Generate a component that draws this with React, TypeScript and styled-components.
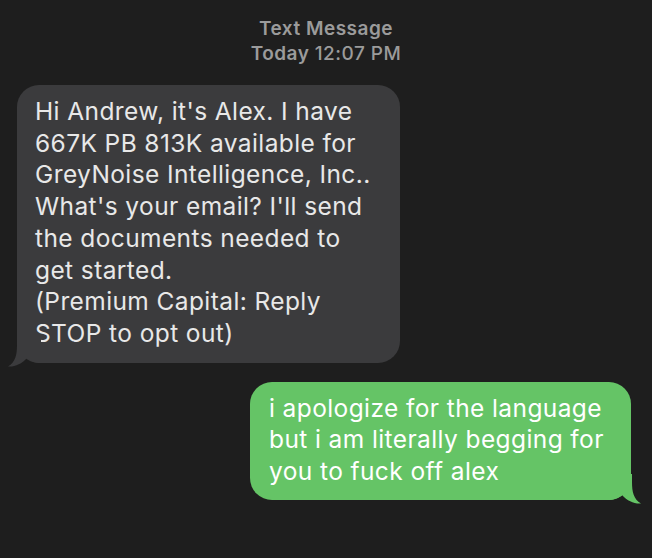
import React from 'react';
import styled, { createGlobalStyle } from 'styled-components';

const GlobalStyle = createGlobalStyle`
  html, body {
    margin: 0;
    padding: 0;
    background: #1e1e1e;
  }
  body {
    font-family: Inter, "Liberation Sans", sans-serif;
    -webkit-font-smoothing: antialiased;
  }
`;

const Page = styled.div`
  width: 652px;
  height: 558px;
  box-sizing: border-box;
  padding-top: 16px;
  display: flex;
  flex-direction: column;
  overflow: hidden;
`;

const Header = styled.div`
  align-self: center;
  text-align: center;
  color: #9b9b9b;
  font-size: 19px;
  line-height: 25px;
  letter-spacing: 0.5px;
  font-weight: 600;
`;

const Time = styled.span`
  font-weight: 500;
`;

const Row = styled.div<{ $outgoing?: boolean }>`
  display: flex;
  justify-content: ${(p) => (p.$outgoing ? 'flex-end' : 'flex-start')};
  padding: ${(p) => (p.$outgoing ? '0 21px 0 0' : '0 0 0 17px')};
  margin-top: 19px;
`;

const Bubble = styled.div<{ $outgoing?: boolean }>`
  position: relative;
  box-sizing: border-box;
  width: ${(p) => (p.$outgoing ? '381px' : '383px')};
  padding: ${(p) => (p.$outgoing ? '11px 18px 12px 19px' : '11px 18px 13px 18px')};
  border-radius: 22px;
  background: ${(p) => (p.$outgoing ? '#65c466' : '#3b3b3d')};
  color: ${(p) => (p.$outgoing ? '#ffffff' : '#e8e8e8')};
  font-size: 24.5px;
  letter-spacing: 0.4px;
  line-height: 31.7px;
  white-space: nowrap;
`;

const Tail = styled.svg<{ $outgoing?: boolean }>`
  position: absolute;
  bottom: -4px;
  width: 40px;
  height: 30px;
  ${(p) =>
    p.$outgoing
      ? 'right: -11px; transform: scaleX(-1);'
      : 'left: -10px;'}
`;

function BubbleTail({ outgoing, color }: { outgoing?: boolean; color: string }) {
  return (
    <Tail $outgoing={outgoing} viewBox="0 0 40 30">
      <path
        d="M10 0 L10 8 C10 18 8.5 25 1 29.5 C8 30 14.5 27 20 21 C24 24.5 28 26 34 26 L34 0 Z"
        fill={color}
      />
    </Tail>
  );
}

const incoming = [
  "Hi Andrew, it's Alex. I have",
  '667K PB 813K available for',
  'GreyNoise Intelligence, Inc..',
  "What's your email? I'll send",
  'the documents needed to',
  'get started.',
  '(Premium Capital: Reply',
  'STOP to opt out)'
];

const outgoing = [
  'i apologize for the language',
  'but i am literally begging for',
  'you to fuck off alex'
];

function Lines({ lines }: { lines: string[] }) {
  return (
    <>
      {lines.map((line, i) => (
        <div key={i}>{line}</div>
      ))}
    </>
  );
}

export default function App() {
  return (
    <Page>
      <GlobalStyle />
      <Header>
        Text Message
        <br />
        Today <Time>12:07 PM</Time>
      </Header>
      <Row>
        <Bubble>
          <BubbleTail color="#3b3b3d" />
          <Lines lines={incoming} />
        </Bubble>
      </Row>
      <Row $outgoing>
        <Bubble $outgoing>
          <BubbleTail outgoing color="#65c466" />
          <Lines lines={outgoing} />
        </Bubble>
      </Row>
    </Page>
  );
}
